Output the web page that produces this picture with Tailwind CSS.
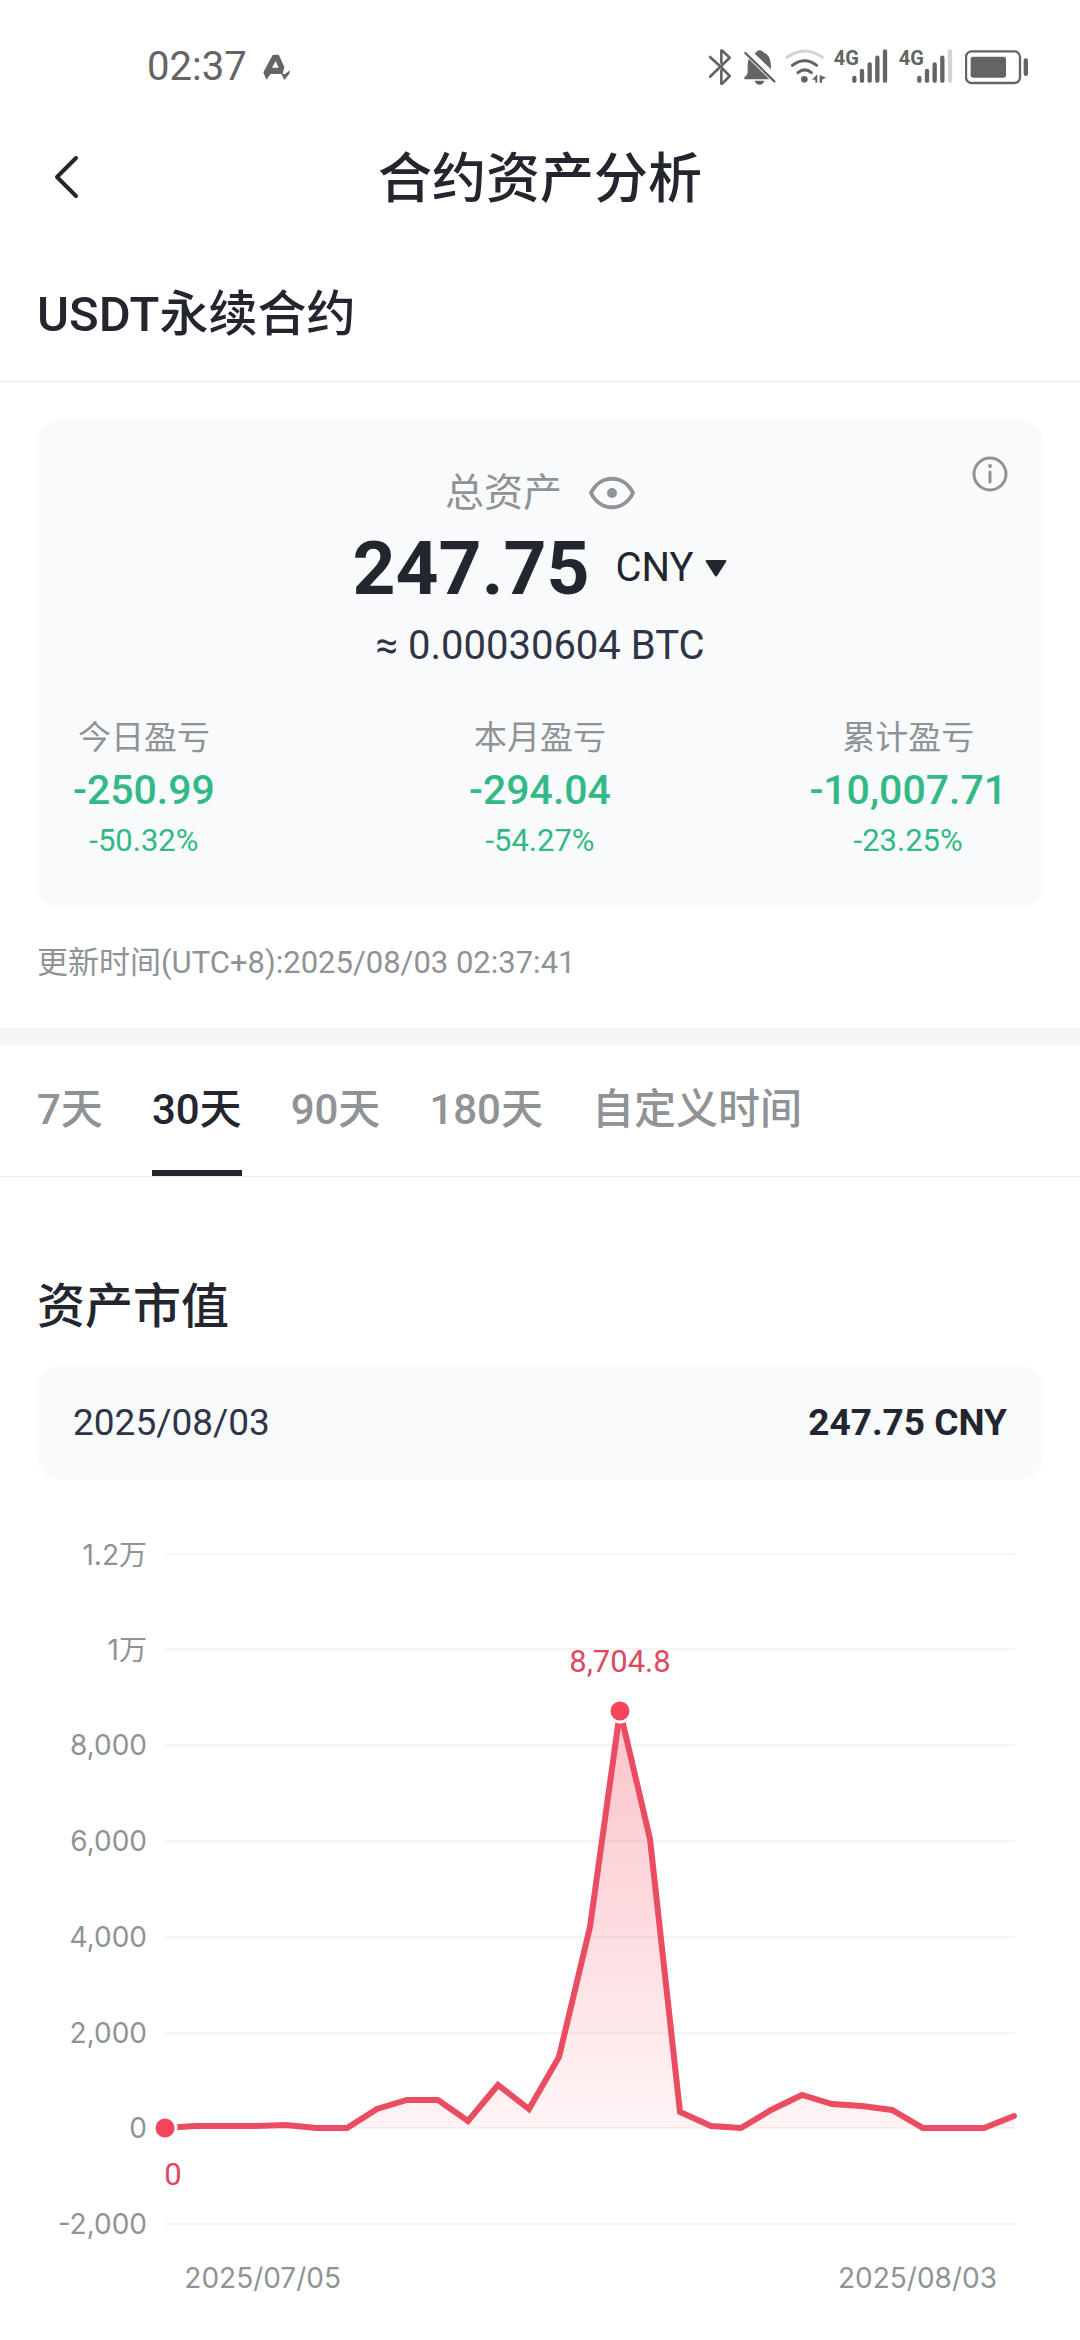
<!DOCTYPE html>
<html lang="zh-CN">
	<head>
		<meta charset="utf-8">
		<meta name="viewport" content="width=device-width, initial-scale=1">
		<title>合约资产分析</title>
		<script src="https://cdn.jsdelivr.net/npm/@tailwindcss/browser@4"></script>
	</head>

	<body class="bg-white text-[#23262f] font-[Roboto,'Noto_Sans_CJK_SC',sans-serif]">
		<!-- status bar -->
		<div class="h-[134px] pl-[147px] pr-[51px] flex items-center justify-between text-[#646464]">
			<div class="flex items-center gap-4">
				<span class="text-[40px] leading-[48px]">02:37</span>
				<svg class="w-[28px] h-[27px]" viewBox="423 69 84 81" fill="currentColor">
					<path fill-rule="evenodd" d="M452 72Q454 71 457 71H467Q470 71 472 75L487 108 482 129H446L433 146 424 124ZM461 90L450 110H470Z"/>
					<path d="M478 129H489L504 118 502 128 487 147Z"/>
				</svg>
			</div>

			<div class="flex items-center gap-[9px]">
				<svg class="w-[26px] h-[36px]" viewBox="57 55 78 108" fill="none" stroke="currentColor" stroke-width="8" stroke-linecap="round" stroke-linejoin="round">
					<path d="M60 79L92 108 119 136 97 159H94V120M94 96V60H97L119 81 60 138"/>
				</svg>
				<svg class="w-[32px] h-[36px]" viewBox="162 55 96 108" fill="currentColor">
					<path d="M194 69C199 65 201 59 209 59S219 65 225 68C240 76 243 91 243 116ZM176 84L238 146H163V140C172 134 173 128 173 118V100ZM194 150H223C221 158 216 162 209 162S196 158 194 150Z"/>
					<path d="M166 67L253 152" stroke="currentColor" stroke-width="7" stroke-linecap="round"/>
				</svg>
				<svg class="w-[40px] h-[36px] overflow-visible" viewBox="285 55 120 108" fill="none" stroke="currentColor" stroke-width="9" stroke-linecap="round">
					<path stroke="#d3d3d3" d="M291 80Q344 42 397 80"/>
					<path d="M307 104Q344 76 380 104M324 126Q344 109 364 126"/>
					<circle cx="343" cy="146" r="10" fill="currentColor" stroke="none"/>
					<path fill="currentColor" stroke="none" d="M382 131V156H376V147H366ZM389 133L408 141 396 147V156H389Z"/>
				</svg>
				<svg class="w-[56px] h-[36px] overflow-visible" viewBox="432 55 168 108" fill="none" stroke="currentColor" stroke-width="13" stroke-linecap="round">
					<text x="431" y="102" font-size="60" font-weight="700" class="font-['Liberation_Sans_Narrow',Roboto,sans-serif]" fill="currentColor" stroke="none">4G</text>
					<path d="M493 142V150M516 121V150M539 101V150M562 81V150M585 62V150"/>
				</svg>
				<svg class="w-[57px] h-[36px] overflow-visible" viewBox="627 55 171 108" fill="none" stroke="currentColor" stroke-width="13" stroke-linecap="round">
					<text x="626" y="102" font-size="60" font-weight="700" class="font-['Liberation_Sans_Narrow',Roboto,sans-serif]" fill="currentColor" stroke="none">4G</text>
					<path d="M688 142V150M711 121V150M734 101V150M757 81V150"/>
					<path stroke="#d3d3d3" d="M780 62V150"/>
				</svg>
				<svg class="w-[64px] h-[36px]" viewBox="825 55 192 108" fill="currentColor">
					<rect x="828" y="62" width="162" height="95" rx="17" fill="none" stroke="currentColor" stroke-width="7"/>
					<rect x="842" y="78" width="106" height="63" rx="7"/>
					<rect x="1001" y="83" width="13" height="53" rx="6"/>
				</svg>
			</div>
		</div>

		<!-- title -->
		<header class="h-[86px] px-[37px] flex items-center">
			<button class="w-[60px] h-[84px] pl-[16px] flex items-center" aria-label="返回">
				<svg class="w-[26px] h-[44px]" viewBox="0 0 26 44" fill="none" stroke="currentColor" stroke-width="4" stroke-linecap="round" stroke-linejoin="round">
					<path d="M23 3L4 22 23 41"/>
				</svg>
			</button>
			<h1 class="flex-1 pt-[6px] text-center text-[54px] leading-[80px] font-medium">合约资产分析</h1>
			<div class="w-[60px]"></div>
		</header>

		<h2 class="px-[37px] pt-[60px] pb-[31px] text-[49px] leading-[70px] font-medium border-b border-[#ededed]">USDT永续合约</h2>

		<main>
			<!-- total assets -->
			<section class="relative mx-[37px] mt-[37px] px-[36px] pt-[50px] pb-[47px] rounded-[24px] bg-[#f8fafc]">
				<button class="absolute top-[36px] right-[34px]" aria-label="说明">
					<svg class="w-[38px] h-[38px]" viewBox="0 0 38 38" fill="none" stroke="#8f9396" stroke-width="3" stroke-linecap="round">
						<circle cx="19" cy="19" r="16"/>
						<path d="M19 17V27"/>
						<circle cx="19" cy="11" r="2" fill="#8f9396" stroke="none"/>
					</svg>
				</button>

				<div class="flex items-center justify-center gap-[27px] text-[#8f9396]">
					<span class="text-[39px] leading-[48px]">总资产</span>
					<button aria-label="隐藏资产">
						<svg class="w-[46px] h-[34px]" viewBox="0 0 46 34" fill="none" stroke="currentColor" stroke-width="4">
							<path d="M2 17C11 -2 35 -2 44 17 35 36 11 36 2 17Z" stroke-linejoin="round"/>
							<circle cx="23" cy="17" r="5" fill="currentColor" stroke="none"/>
						</svg>
					</button>
				</div>

				<div class="mt-[7px] flex items-center justify-center gap-[26px]">
					<span class="text-[75px] leading-[88px] font-bold">247.75</span>
					<label class="flex items-center gap-[11px]">
						<select class="appearance-none bg-transparent text-[40px] leading-[48px]" aria-label="货币">
							<option>CNY</option>
						</select>
						<svg class="w-[22px] h-[17px] pointer-events-none" viewBox="0 0 22 17" fill="currentColor">
							<path d="M2 0H20Q22 0 21 2L12 16Q11 17 10 16L1 2Q0 0 2 0Z"/>
						</svg>
					</label>
				</div>

				<p class="mt-[10px] text-center text-[40px] leading-[48px] text-[#2f3447]">≈ 0.00030604 BTC</p>

				<dl class="mt-[48px] grid grid-cols-[1fr_auto_1fr] text-center text-[#33b986]">
					<div class="justify-self-start">
						<dt class="text-[33px] leading-[40px] text-[#8f9396]">今日盈亏</dt>
						<dd class="mt-[8px] text-[41px] leading-[48px] font-medium">-250.99</dd>
						<dd class="mt-[7px] text-[31px] leading-[40px]">-50.32%</dd>
					</div>
					<div>
						<dt class="text-[33px] leading-[40px] text-[#8f9396]">本月盈亏</dt>
						<dd class="mt-[8px] text-[41px] leading-[48px] font-medium">-294.04</dd>
						<dd class="mt-[7px] text-[31px] leading-[40px]">-54.27%</dd>
					</div>
					<div class="justify-self-end">
						<dt class="text-[33px] leading-[40px] text-[#8f9396]">累计盈亏</dt>
						<dd class="mt-[8px] text-[41px] leading-[48px] font-medium">-10,007.71</dd>
						<dd class="mt-[7px] text-[31px] leading-[40px]">-23.25%</dd>
					</div>
				</dl>
			</section>

			<p class="mx-[37px] mt-[35px] mb-[45px] text-[31px] leading-[40px] text-[#8f9396]">更新时间(UTC+8):2025/08/03 02:37:41</p>

			<!-- range tabs -->
			<nav class="border-t-[17px] border-t-[#f4f5f6] border-b border-b-[#ededed] px-[37px] flex gap-[49px] text-[42px] leading-[50px] font-medium text-[#8f9396]">
				<button class="pt-[40px] pb-[35px] border-b-[6px] border-transparent">7天</button>
				<button class="pt-[40px] pb-[35px] border-b-[6px] border-[#23262f] text-[#23262f]">30天</button>
				<button class="pt-[40px] pb-[35px] border-b-[6px] border-transparent">90天</button>
				<button class="pt-[40px] pb-[35px] border-b-[6px] border-transparent">180天</button>
				<button class="pt-[40px] pb-[35px] border-b-[6px] border-transparent">自定义时间</button>
			</nav>

			<!-- asset value -->
			<section>
				<h2 class="mx-[37px] mt-[98px] text-[48px] leading-[64px] font-medium">资产市值</h2>
				<div class="mx-[37px] mt-[27px] px-[36px] py-[32px] rounded-[24px] bg-[#f8fafc] flex justify-between text-[37px] leading-[50px]">
					<span class="text-[#2f3447]">2025/08/03</span>
					<span class="font-bold">247.75 CNY</span>
				</div>

				<svg class="block w-full h-auto" viewBox="0 0 1080 860" role="img" aria-label="资产市值">
					<defs>
						<linearGradient id="fill" gradientUnits="userSpaceOnUse" x1="0" y1="231" x2="0" y2="648">
							<stop offset="0" stop-color="#f4455a" stop-opacity="0.32"/>
							<stop offset="1" stop-color="#f4455a" stop-opacity="0.06"/>
						</linearGradient>
					</defs>

					<path stroke="#f5f5f5" stroke-width="2" d="M165 74H1015M165 169H1015M165 265H1015M165 361H1015M165 457H1015M165 553H1015M165 648H1015M165 744H1015"/>

					<g class="font-[Inter,'Noto_Sans_CJK_SC',sans-serif]" font-size="28" fill="#8f9396" text-anchor="end">
						<text x="147" y="85">1.2万</text>
						<text x="147" y="180">1万</text>
						<text x="147" y="275">8,000</text>
						<text x="147" y="371">6,000</text>
						<text x="147" y="467">4,000</text>
						<text x="147" y="563">2,000</text>
						<text x="147" y="658">0</text>
						<text x="147" y="754">-2,000</text>
						<text x="341" y="808">2025/07/05</text>
						<text x="997" y="808">2025/08/03</text>
					</g>

					<path fill="url(#fill)" d="M165 648L195 646 286 645 316 648H347L377 629 407 620H438L468 641 498 605 529 629 559 577 590 447 620 231 650 359 680 632 711 646 741 648 771 630 802 615 832 624 862 626 892 630 923 648H984L1014 636V648Z"/>
					<path fill="none" stroke="#ea4d62" stroke-width="6" stroke-linecap="round" d="M165 648L195 646 226 646 256 646 286 645 316 648H347L377 629 407 620H438L468 641 498 605 529 629 559 577 590 447 620 231 650 359 680 632 711 646 741 648 771 630 802 615 832 624 862 626 892 630 923 648H984L1014 636"/>

					<g fill="#f4455a" stroke="#fff" stroke-width="3">
						<circle cx="165" cy="648" r="11"/>
						<circle cx="620" cy="231" r="11"/>
					</g>
					<g font-size="31" fill="#e0485f">
						<text x="620" y="192" text-anchor="middle">8,704.8</text>
						<text x="173" y="705" text-anchor="middle">0</text>
					</g>
				</svg>
			</section>
		</main>
	</body>
</html>
